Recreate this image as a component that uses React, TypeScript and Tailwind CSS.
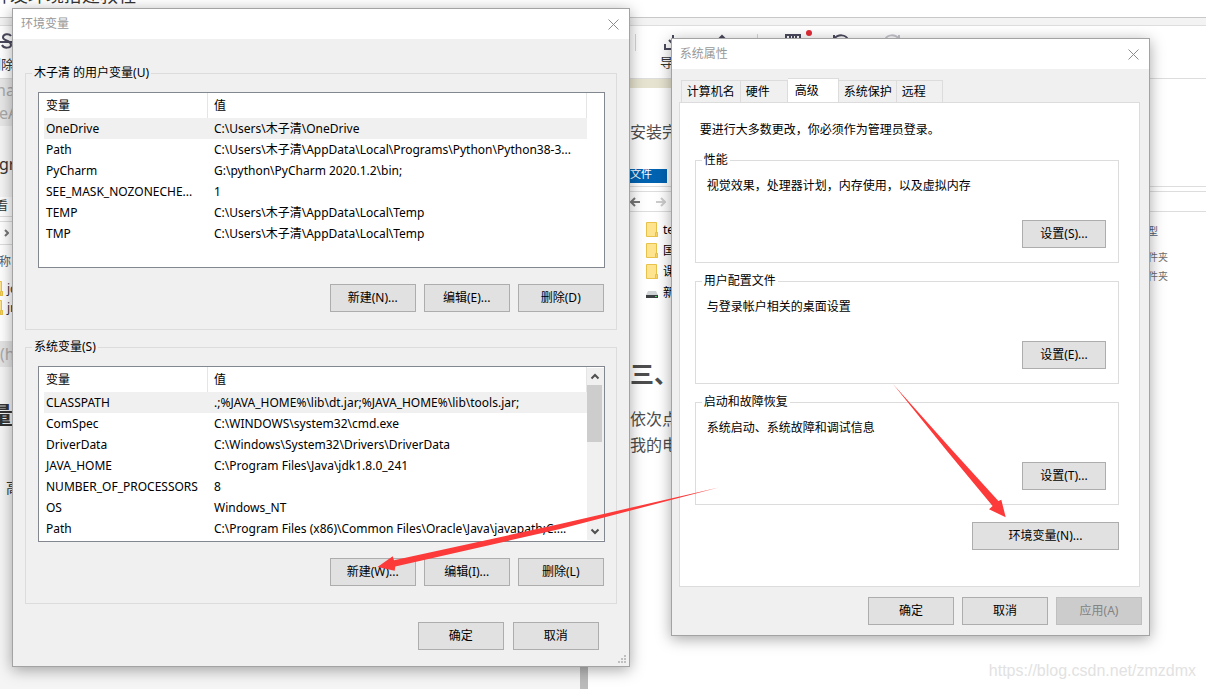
import { useState, type ReactNode } from "react";
import clsx from "clsx";

const userVars = [
  { name: "OneDrive", value: "C:\\Users\\木子清\\OneDrive" },
  { name: "Path", value: "C:\\Users\\木子清\\AppData\\Local\\Programs\\Python\\Python38-3..." },
  { name: "PyCharm", value: "G:\\python\\PyCharm 2020.1.2\\bin;" },
  { name: "SEE_MASK_NOZONECHE...", value: "1" },
  { name: "TEMP", value: "C:\\Users\\木子清\\AppData\\Local\\Temp" },
  { name: "TMP", value: "C:\\Users\\木子清\\AppData\\Local\\Temp" },
];

const systemVars = [
  { name: "CLASSPATH", value: ".;%JAVA_HOME%\\lib\\dt.jar;%JAVA_HOME%\\lib\\tools.jar;" },
  { name: "ComSpec", value: "C:\\WINDOWS\\system32\\cmd.exe" },
  { name: "DriverData", value: "C:\\Windows\\System32\\Drivers\\DriverData" },
  { name: "JAVA_HOME", value: "C:\\Program Files\\Java\\jdk1.8.0_241" },
  { name: "NUMBER_OF_PROCESSORS", value: "8" },
  { name: "OS", value: "Windows_NT" },
  { name: "Path", value: "C:\\Program Files (x86)\\Common Files\\Oracle\\Java\\javapath;C:..." },
];

const tabs = [
  { title: "计算机名", width: "w-[60px]" },
  { title: "硬件", width: "w-[47px]" },
  { title: "高级", width: "w-[51px]" },
  { title: "系统保护", width: "w-[58px]" },
  { title: "远程", width: "w-[46px]" },
];

const sections = [
  { title: "性能", text: "视觉效果，处理器计划，内存使用，以及虚拟内存", button: "设置(S)..." },
  { title: "用户配置文件", text: "与登录帐户相关的桌面设置", button: "设置(E)..." },
  { title: "启动和故障恢复", text: "系统启动、系统故障和调试信息", button: "设置(T)..." },
];

function WinButton({ children, width = "w-[86px]", disabled = false }: { children: ReactNode; width?: string; disabled?: boolean }) {
  return (
    <button
      disabled={disabled}
      className={clsx(
        "h-7 border text-center whitespace-nowrap",
        width,
        disabled ? "border-[#bfbfbf] bg-[#cccccc] text-[#838383]" : "border-[#adadad] bg-[#e1e1e1] hover:border-[#0078d7] hover:bg-[#e5f1fb]"
      )}
    >
      {children}
    </button>
  );
}

function Dialog({ title, className, children }: { title: string; className: string; children: ReactNode }) {
  return (
    <section
      role="dialog"
      aria-label={title}
      className={clsx("relative min-w-0 border border-[#a3a3a3] bg-[#f0f0f0] shadow-[0_3px_14px_rgba(0,0,0,0.35)]", className)}
    >
      <header className="flex h-[30px] items-center justify-between bg-white pr-2.5 pl-2 text-[#999999]">
        <h2>{title}</h2>
        <button aria-label="关闭">
          <svg width="11" height="11" viewBox="0 0 11 11" fill="none" stroke="#8c8c8c">
            <path d="M0.5 0.5l10 10M10.5 0.5l-10 10" />
          </svg>
        </button>
      </header>
      {children}
    </section>
  );
}

function Group({ title, className, children }: { title: string; className?: string; children: ReactNode }) {
  return (
    <fieldset className={clsx("min-w-0 border border-[#dcdcdc]", className)}>
      <legend className="ml-1.5 h-[18px] px-0.5 leading-[18px]">{title}</legend>
      {children}
    </fieldset>
  );
}

function Scrollbar() {
  return (
    <div className="my-px flex w-[17px] shrink-0 flex-col items-center bg-[#f0f0f0]">
      <svg className="h-[17px] shrink-0" width="17" height="17" viewBox="0 0 17 17" fill="none" stroke="#505050" strokeWidth="2">
        <path d="M4.5 10.5l3.5-3.5 3.5 3.5" />
      </svg>
      <div className="h-[57px] w-[15px] self-start bg-[#cdcdcd]" />
      <svg className="mt-auto h-[17px] shrink-0" width="17" height="17" viewBox="0 0 17 17" fill="none" stroke="#505050" strokeWidth="2">
        <path d="M4.5 6.5l3.5 3.5 3.5-3.5" />
      </svg>
    </div>
  );
}

function VarTable({ vars, scroll = false }: { vars: { name: string; value: string }[]; scroll?: boolean }) {
  const [selected, setSelected] = useState(0);

  return (
    <div className="flex h-44 overflow-hidden border border-[#828790] bg-white pl-[5px]">
      <div className="min-w-0 flex-1">
        <table className="w-full table-fixed border-separate border-spacing-0 text-left whitespace-nowrap">
          <colgroup>
            <col className="w-[164px]" />
            <col />
          </colgroup>
          <thead>
            <tr className="h-[25px]">
              <th className="border-r border-[#e5e5e5] pl-0.5 font-normal">变量</th>
              <th className="border-r border-[#e5e5e5] pl-1.5 font-normal">值</th>
            </tr>
          </thead>
          <tbody>
            {vars.map((v, i) => (
              <tr key={v.name} onClick={() => setSelected(i)} className={clsx("h-[21px]", i === selected && "bg-[#f0f0f0]")}>
                <td className="pl-0.5">{v.name}</td>
                <td className="pl-1.5">{v.value}</td>
              </tr>
            ))}
          </tbody>
        </table>
      </div>
      {scroll ? <Scrollbar /> : <div className="w-[17px]" />}
    </div>
  );
}

function EnvDialog() {
  return (
    <Dialog title="环境变量" className="mt-2 flex-[618_1_0%]">
      <div className="px-3 pt-[25px] pb-4">
        <Group title="木子清 的用户变量(U)" className="pb-[17px]">
          <div className="pt-2.5 pr-[11px] pl-3">
            <VarTable vars={userVars} />
          </div>
          <div className="mt-4 flex justify-end gap-2 pr-3">
            <WinButton>新建(N)...</WinButton>
            <WinButton>编辑(E)...</WinButton>
            <WinButton>删除(D)</WinButton>
          </div>
        </Group>
        <Group title="系统变量(S)" className="mt-2 pb-[17px]">
          <div className="pt-2.5 pr-[11px] pl-3">
            <VarTable vars={systemVars} scroll />
          </div>
          <div className="mt-4 flex justify-end gap-2 pr-3">
            <WinButton>新建(W)...</WinButton>
            <WinButton>编辑(I)...</WinButton>
            <WinButton>删除(L)</WinButton>
          </div>
        </Group>
        <div className="mt-[18px] flex justify-end gap-[9px] pr-[18px]">
          <WinButton>确定</WinButton>
          <WinButton>取消</WinButton>
        </div>
      </div>
      <svg className="absolute right-[3px] bottom-[3px]" width="8" height="8" viewBox="0 0 8 8" fill="#bfbfbf">
        <path d="M6 0h2v2H6zM3 3h2v2H3zM6 3h2v2H6zM0 6h2v2H0zM3 6h2v2H3zM6 6h2v2H6z" />
      </svg>
    </Dialog>
  );
}

function SystemDialog() {
  const [active, setActive] = useState(2);

  return (
    <Dialog title="系统属性" className="mt-[38px] flex-[479_1_0%]">
      <div className="pt-[9px] pr-[9px] pb-2.5 pl-[7px]">
        <div role="tablist" className="flex h-6 items-end pl-0.5">
          {tabs.map((tab, i) => (
            <button
              key={tab.title}
              role="tab"
              aria-selected={i === active}
              onClick={() => setActive(i)}
              className={clsx(
                "border-t border-r border-[#dcdcdc] text-left whitespace-nowrap",
                tab.width,
                i === 0 && "border-l",
                i === active ? "h-6 bg-white pl-[7px]" : "h-[22px] pl-[5px]"
              )}
            >
              {tab.title}
            </button>
          ))}
        </div>
        <div role="tabpanel" className="border border-[#dcdcdc] bg-white pt-[18px] pr-5 pb-9 pl-[15px]">
          <p className="pl-[5px] leading-[18px]">要进行大多数更改，你必须作为管理员登录。</p>
          <div className="mt-3 flex flex-col gap-[9px]">
            {sections.map((s) => (
              <Group key={s.title} title={s.title} className="pb-3.5">
                <p className="pt-2 pl-[11px] leading-[18px]">{s.text}</p>
                <div className="mt-[25px] flex justify-end pr-3">
                  <WinButton width="w-[84px]">{s.button}</WinButton>
                </div>
              </Group>
            ))}
          </div>
          <div className="mt-[17px] flex justify-end">
            <WinButton width="w-[147px]">环境变量(N)...</WinButton>
          </div>
        </div>
      </div>
      <div className="flex justify-end gap-2 pr-[7px] pb-2.5">
        <WinButton>确定</WinButton>
        <WinButton>取消</WinButton>
        <WinButton disabled>应用(A)</WinButton>
      </div>
    </Dialog>
  );
}

function Folder() {
  return (
    <svg className="shrink-0" width="12" height="15" viewBox="0 0 12 15">
      <path d="M0.5 0.5h10v10h1v4h-11z" fill="#ffe48f" stroke="#e8c24a" />
      <path d="M9.5 10.5h2v4h-2z" fill="#fbd45c" stroke="#e8c24a" />
    </svg>
  );
}

function EditorToolbar() {
  return (
    <div className="flex h-[53px] border-b border-[#dddddd] bg-white">
      <div className="flex w-[630px] flex-col pt-1.5">
        <svg width="14" height="20" viewBox="0 0 14 20" fill="none" stroke="#4a4a5e" strokeWidth="2">
          <path d="M11 4C9 1 3 2 3 5.500C3 9 11 8 11 13C11 16 4 17 2 13M0 10h14" />
        </svg>
        <span className="mt-1 -ml-3 text-[13px] text-[#333333]">删除</span>
      </div>
      <div className="flex items-start pt-2">
        <div className="ml-[5px] h-[17px] w-px bg-[#d5d5d5]" />
        <div className="ml-6 flex w-8 flex-col">
          <svg className="ml-1" width="18" height="18" viewBox="0 0 18 18" fill="none" stroke="#4a4a5e" strokeWidth="2">
            <path d="M9 1v9M5 6l4 4 4-4M1 10v5h16v-5" />
          </svg>
          <span className="mt-0.5 text-[13px] text-[#333333]">导出</span>
        </div>
        <svg className="ml-[22px]" width="16" height="18" viewBox="0 0 16 18" fill="none" stroke="#4a4a5e" strokeWidth="2">
          <path d="M3 7l5-5 5 5M8 2v11" />
        </svg>
        <div className="ml-[27px] h-[17px] w-px bg-[#d5d5d5]" />
        <svg className="-mt-1 ml-[26px]" width="30" height="20" viewBox="0 0 30 20" fill="none" stroke="#4a4a5e" strokeWidth="2">
          <path d="M2 18V5h14v13M6 5v6h6V5M9 6v4" />
          <circle cx="25" cy="3" r="3" fill="#e02b36" stroke="none" />
        </svg>
        <svg className="ml-[18px]" width="18" height="16" viewBox="0 0 18 16" fill="none" stroke="#4a4a5e" strokeWidth="2">
          <path d="M2 1v5h5M2 5C6 0 14 0 16 6" />
        </svg>
        <svg className="ml-[33px]" width="18" height="16" viewBox="0 0 18 16" fill="none" stroke="#c4c4cc" strokeWidth="2">
          <path d="M16 1v5h-5M16 5C12 0 4 0 2 6" />
        </svg>
      </div>
    </div>
  );
}

function SourcePane() {
  return (
    <div className="flex-[580_1_0%] overflow-hidden bg-[#f5f5f5] whitespace-nowrap text-[#333333]">
      <div className="h-[47px] bg-[#e8e8e8] text-base leading-[23px] text-[#aaaaaa]">
        <p className="-ml-1">na</p>
        <p className="-ml-px">eA</p>
      </div>
      <p className="mt-[26px] -ml-px text-base leading-6">gram</p>
      <div className="mt-[21px] bg-white">
        <p className="-ml-1 border-b border-[#dddddd] pb-px leading-[18px]">看</p>
        <div className="mt-1 flex h-6 items-center border-y border-[#dddddd] pl-1">
          <svg width="5" height="8" viewBox="0 0 5 8" fill="none" stroke="#777777" strokeWidth="2">
            <path d="M1 1l3 3-3 3" />
          </svg>
        </div>
        <p className="mt-2 -ml-px leading-[18px] text-[#4c607a]">称</p>
        <ul className="mt-2 pb-6">
          {["jdk", "jre"].map((name) => (
            <li key={name} className="-ml-[9px] flex h-[19px] items-center gap-1">
              <Folder />
              <span>{name}</span>
            </li>
          ))}
        </ul>
      </div>
      <p className="bg-[#e4e4e4] text-base leading-[26px] text-[#aaaaaa]">(ht</p>
      <p className="mt-[30px] -ml-[11px] text-2xl leading-9 font-bold">量</p>
      <p className="mt-[46px] ml-1.5 text-sm leading-[18px]">高</p>
    </div>
  );
}

function PreviewPane() {
  return (
    <div className="flex-[618_1_0%] overflow-hidden bg-white text-[#4d4d4d]">
      <div className="pl-[42px]">
        <div className="h-[9px] w-20 bg-[#e6e3d0]" />
        <p className="mt-8 text-base leading-6">安装完</p>
        <div className="mt-[25px] h-[14px] w-[37px] bg-[#0063b1] text-[11px] leading-[10px] text-white">文件</div>
        <div className="mt-[3px] h-1.5 border-y border-[#dddddd]" />
        <div className="flex h-5 items-center gap-4 border-b border-[#dddddd]">
          <svg width="10" height="10" viewBox="0 0 10 10" fill="none" stroke="#777777" strokeWidth="2">
            <path d="M10 5H1M5 1L1 5l4 4" />
          </svg>
          <svg width="10" height="10" viewBox="0 0 10 10" fill="none" stroke="#cccccc" strokeWidth="2">
            <path d="M0 5h9M5 1l4 4-4 4" />
          </svg>
        </div>
        <div className="mt-[7px] flex justify-between">
          <ul className="ml-4 text-black">
            {["test", "国", "课"].map((name) => (
              <li key={name} className="flex h-[21px] items-center gap-[5px]">
                <Folder />
                <span>{name}</span>
              </li>
            ))}
            <li className="flex h-[21px] items-center gap-[5px]">
              <svg className="mt-1" width="12" height="8" viewBox="0 0 12 8">
                <path d="M2 0h8l2 4H0z" fill="#cfd3d6" />
                <path d="M0 4h12v3H0z" fill="#3b3f42" />
                <path d="M9 5h2v1H9z" fill="#3fd45a" />
              </svg>
              <span>新</span>
            </li>
          </ul>
          <div className="w-[68px] text-[10px]">
            <p className="mt-[3px] ml-2.5 leading-[18px] text-[#4c607a]">型</p>
            <p className="mt-2 leading-[19px] text-[#6d6d6d]">文件夹</p>
            <p className="leading-[19px] text-[#6d6d6d]">文件夹</p>
          </div>
        </div>
        <h3 className="mt-[53px] text-2xl leading-9 font-bold">三、</h3>
        <p className="mt-3.5 text-base leading-[26px]">依次点</p>
        <p className="text-base leading-[26px]">我的电</p>
      </div>
    </div>
  );
}

// Hand drawn pointers that lead from one dialog to the next button
function Pointers() {
  return (
    <svg className="pointer-events-none absolute top-0 left-0 size-full" fill="#fc3a3a">
      <path d="M377.500 567L392.700 556.300L394 560.200L560 524L718.700 487.500L560 529L395.300 566.600L394.700 570.800Z" />
      <path d="M1005.700 517.200L1001.300 499.700L998.400 501L952 450L893 384L947 451L992.600 506L989 509.200Z" />
    </svg>
  );
}

export default function App() {
  return (
    <main className="relative flex min-h-screen flex-col overflow-hidden bg-white font-['Noto_Sans','Noto_Sans_CJK_SC',sans-serif] text-xs text-black">
      <div className="h-[17px] overflow-hidden">
        <h1 className="-mt-[17px] -ml-2 text-lg leading-6 text-[#333333]">开发环境搭建教程</h1>
      </div>
      <div className="h-[9px] border-y border-t-[#c8c8c8] border-b-[#dedede] bg-[#f3f3f3]" />
      <EditorToolbar />
      <div className="flex flex-1">
        <SourcePane />
        <div className="w-2 bg-[#bbbbbb]" />
        <PreviewPane />
      </div>
      <div className="absolute inset-x-0 top-0 flex items-start gap-[41px] pr-14 pl-3">
        <EnvDialog />
        <SystemDialog />
      </div>
      <a
        href="https://blog.csdn.net/zmzdmx"
        className="absolute right-2.5 bottom-2 font-['Liberation_Sans',sans-serif] text-base leading-5 text-[#e2e2e2]"
      >
        https://blog.csdn.net/zmzdmx
      </a>
      <Pointers />
    </main>
  );
}
